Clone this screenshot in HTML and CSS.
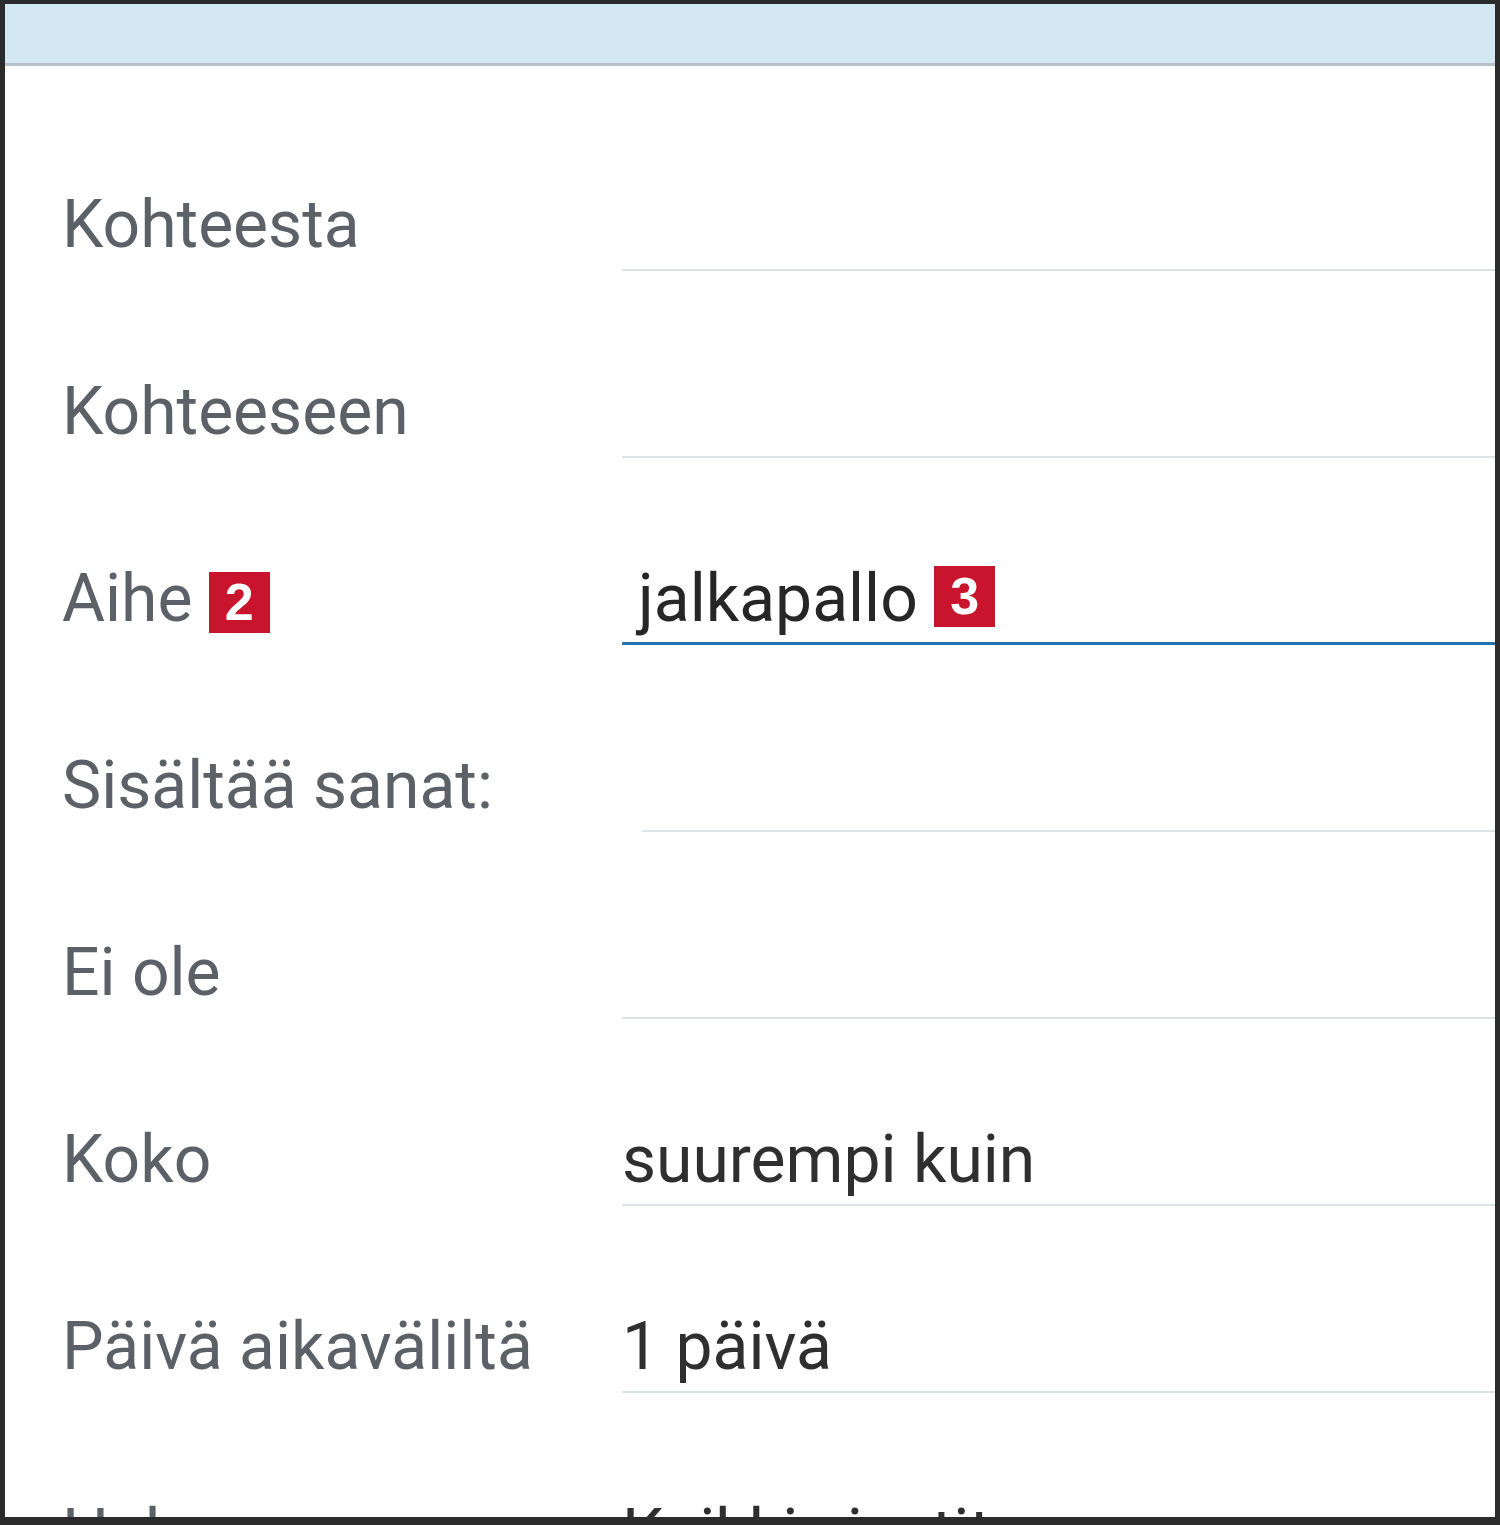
FILE: index.html
```html
<!DOCTYPE html>
<html lang="fi">

<head>
    <meta charset="UTF-8">
    <meta name="viewport" content="width=device-width, initial-scale=1.0">
    <title>Hakuasetukset</title>
    <link rel="stylesheet" href="styles.css">
</head>

<body>
    <div class="window">
        <header class="topbar"></header>
        <form class="filters">
            <div class="row">
                <div class="label">Kohteesta</div>
                <div class="field"></div>
            </div>
            <div class="row">
                <div class="label">Kohteeseen</div>
                <div class="field"></div>
            </div>
            <div class="row">
                <div class="label">Aihe <span class="badge badge-low">2</span></div>
                <div class="field field-active">jalkapallo <span class="badge">3</span></div>
            </div>
            <div class="row">
                <div class="label">Sisältää sanat:</div>
                <div class="field field-shift"></div>
            </div>
            <div class="row">
                <div class="label">Ei ole</div>
                <div class="field"></div>
            </div>
            <div class="row">
                <div class="label">Koko</div>
                <div class="field field-value">suurempi kuin</div>
            </div>
            <div class="row">
                <div class="label">Päivä aikaväliltä</div>
                <div class="field field-value">1 päivä</div>
            </div>
            <div class="row">
                <div class="label">Haku</div>
                <div class="field field-value">Kaikki viestit</div>
            </div>
        </form>
    </div>
</body>

</html>
```

FILE: styles.css
```css
html,
body {
    margin: 0;
    height: 1525px;
    overflow: hidden;
    background-color: #2b2b2b;
}

.window {
    box-sizing: border-box;
    width: 1500px;
    height: 1525px;
    border-style: solid;
    border-color: #2b2b2b;
    border-width: 4px 5px 8px 5px;
    background-color: white;
    overflow: hidden;
    font-family: Roboto, "Liberation Sans", sans-serif;
}

.topbar {
    height: 59px;
    background-color: #d4e8f2;
    border-bottom: 3px solid #b7c3c9;
}

.filters {
    padding-top: 18px;
}

.row {
    display: grid;
    grid-template-columns: 560px 1fr;
    align-items: end;
    height: 187px;
    padding-left: 57px;
}

.label,
.field {
    box-sizing: border-box;
    height: 86px;
    line-height: 80px;
    font-size: 66px;
    padding-bottom: 4px;
    border-bottom: 2px solid transparent;
    white-space: nowrap;
}

.label {
    color: #5b6166;
}

.field {
    color: #2f2f2f;
    border-bottom-color: #dce3e6;
}

.field-active {
    color: #262626;
    padding-left: 16px;
    padding-bottom: 3px;
    border-bottom: 3px solid #2473b3;
}

.field-shift {
    margin-left: 20px;
}

.badge {
    display: inline-block;
    width: 61px;
    height: 61px;
    background-color: #c8142d;
    color: white;
    font-family: "Liberation Sans", Arial, sans-serif;
    font-weight: bold;
    font-size: 52px;
    line-height: 61px;
    text-align: center;
    vertical-align: 7px;
}

.badge-low {
    vertical-align: 1px;
}
```
